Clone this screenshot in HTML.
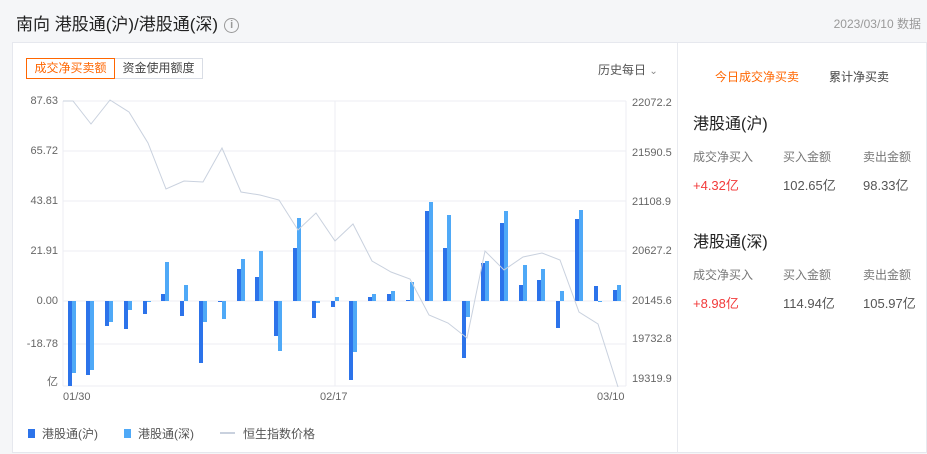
<!DOCTYPE html>
<html><head><meta charset="utf-8"><style>
*{margin:0;padding:0;box-sizing:border-box}
body{width:927px;height:454px;background:#f5f6f8;font-family:"Liberation Sans","Noto Sans CJK SC",sans-serif;position:relative;overflow:hidden;color:#333}
.abs{position:absolute;white-space:nowrap}
.title{left:16px;top:10px;font-size:17px;color:#222}
.info{display:inline-block;width:15px;height:15px;border:1.3px solid #999;border-radius:50%;font-size:11px;line-height:13px;text-align:center;color:#999;vertical-align:2px;margin-left:6px;font-weight:bold}
.date{right:6px;top:15px;font-size:12px;color:#999}
.card{left:12px;top:42px;width:915px;height:411px;background:#fff;border:1px solid #e6e8ee}
.div{left:677px;top:43px;width:1px;height:410px;background:#e8eaef}
.tab1{left:26px;top:58px;width:89px;height:21px;border:1px solid #f60;color:#f60;font-size:12px;line-height:19px;text-align:center}
.tab2{left:115px;top:58px;width:88px;height:21px;border:1px solid #d9dde5;border-left:none;color:#444;font-size:12px;line-height:19px;text-align:center}
.hist{left:598px;top:61px;font-size:12px;color:#555}
.ax{font-size:11px;color:#666}
.lg{font-size:12px;color:#555;top:425px}
.r1{font-size:12px}
</style></head><body>
<div class="abs title">南向 港股通(沪)/港股通(深)<span class="info">i</span></div>
<div class="abs date">2023/03/10 数据</div>
<div class="abs card"></div>
<div class="abs div"></div>
<div class="abs tab1">成交净买卖额</div>
<div class="abs tab2">资金使用额度</div>
<div class="abs hist">历史每日 <span style="color:#888;font-size:10px">&#8964;</span></div>

<svg class="abs" style="left:0;top:0" width="927" height="454">
<g stroke="#eceef3" stroke-width="1">
<line x1="63" y1="101" x2="626" y2="101"/><line x1="63" y1="151" x2="626" y2="151"/>
<line x1="63" y1="201" x2="626" y2="201"/><line x1="63" y1="251" x2="626" y2="251"/>
<line x1="63" y1="301" x2="626" y2="301"/><line x1="63" y1="344" x2="626" y2="344"/>
<line x1="63" y1="386" x2="626" y2="386"/>
<line x1="63" y1="101" x2="63" y2="386"/><line x1="335" y1="101" x2="335" y2="386"/>
<line x1="626" y1="101" x2="626" y2="386"/>
</g>
<g id="bars"></g>
<polyline fill="none" stroke="#c9d1de" stroke-width="1" points="63,101 73,101 91,124 110,100 129,112 148,143 166,189 184,181 203,182 222,148 241,192 260,195 279,200 298,230 316,213 335,241 353,224 372,261 391,272 410,279 429,315 448,323 467,338 485,251 504,270 523,257 542,253 560,260 579,312 598,324 618,387"/>
</svg>

<div class="abs ax" style="right:869px;top:95px">87.63</div>
<div class="abs ax" style="right:869px;top:145px">65.72</div>
<div class="abs ax" style="right:869px;top:195px">43.81</div>
<div class="abs ax" style="right:869px;top:245px">21.91</div>
<div class="abs ax" style="right:869px;top:295px">0.00</div>
<div class="abs ax" style="right:869px;top:338px">-18.78</div>
<div class="abs ax" style="right:869px;top:373px">亿</div>
<div class="abs ax" style="left:632px;top:97px">22072.2</div>
<div class="abs ax" style="left:632px;top:147px">21590.5</div>
<div class="abs ax" style="left:632px;top:196px">21108.9</div>
<div class="abs ax" style="left:632px;top:245px">20627.2</div>
<div class="abs ax" style="left:632px;top:295px">20145.6</div>
<div class="abs ax" style="left:632px;top:333px">19732.8</div>
<div class="abs ax" style="left:632px;top:373px">19319.9</div>
<div class="abs ax" style="left:63px;top:391px">01/30</div>
<div class="abs ax" style="left:320px;top:391px">02/17</div>
<div class="abs ax" style="left:597px;top:391px">03/10</div>

<div class="abs lg" style="left:28px"><span style="display:inline-block;width:7px;height:9px;background:#2c73ea;margin-right:7px"></span>港股通(沪)</div>
<div class="abs lg" style="left:124px"><span style="display:inline-block;width:7px;height:9px;background:#4fa9f7;margin-right:7px"></span>港股通(深)</div>
<div class="abs lg" style="left:220px"><span style="display:inline-block;width:15px;height:2px;background:#c9d1de;vertical-align:4px;margin-right:8px"></span>恒生指数价格</div>

<div class="abs" style="left:715px;top:68px;font-size:12px;color:#f60">今日成交净买卖</div>
<div class="abs" style="left:829px;top:68px;font-size:12px;color:#444">累计净买卖</div>
<div class="abs" style="left:693px;top:110px;font-size:16px;color:#222">港股通(沪)</div>
<div class="abs r1" style="left:693px;top:148px;color:#777">成交净买入</div>
<div class="abs r1" style="left:783px;top:148px;color:#777">买入金额</div>
<div class="abs r1" style="left:863px;top:148px;color:#777">卖出金额</div>
<div class="abs" style="left:693px;top:175px;font-size:13px;color:#f23a3a">+4.32亿</div>
<div class="abs" style="left:783px;top:175px;font-size:13px;color:#555">102.65亿</div>
<div class="abs" style="left:863px;top:175px;font-size:13px;color:#555">98.33亿</div>
<div class="abs" style="left:693px;top:228px;font-size:16px;color:#222">港股通(深)</div>
<div class="abs r1" style="left:693px;top:266px;color:#777">成交净买入</div>
<div class="abs r1" style="left:783px;top:266px;color:#777">买入金额</div>
<div class="abs r1" style="left:863px;top:266px;color:#777">卖出金额</div>
<div class="abs" style="left:693px;top:293px;font-size:13px;color:#f23a3a">+8.98亿</div>
<div class="abs" style="left:783px;top:293px;font-size:13px;color:#555">114.94亿</div>
<div class="abs" style="left:863px;top:293px;font-size:13px;color:#555">105.97亿</div>

<script>
var d=[[68,386,373],[86,375,370],[105,326,322],[124,329,310],[143,314,302],[161,294,262],[180,316,285],[199,363,322],[218,302,319],[237,269,259],[255,277,251],[274,336,351],[293,248,218],[312,318,303],[331,307,297],[349,380,352],[368,297,294],[387,294,291],[406,300,282],[425,211,202],[443,248,215],[462,358,317],[481,263,261],[500,223,211],[519,285,265],[537,280,269],[556,328,291],[575,219,210],[594,286,302],[613,290,285]];
var s='';function r(x,y,c){var t=Math.min(y,301),h=Math.max(Math.abs(y-301),1);s+='<rect x="'+x+'" y="'+t+'" width="4" height="'+h+'" fill="'+c+'"/>';}
d.forEach(function(b){r(b[0],b[1],'#2c73ea');r(b[0]+4,b[2],'#4fa9f7');});
document.getElementById('bars').innerHTML=s;
</script>
</body></html>
